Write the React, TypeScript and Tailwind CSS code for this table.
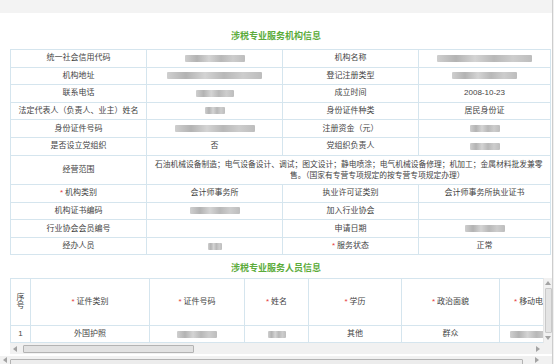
import React from "react";

const Blur = ({ w }: { w: number }) => (
  <span
    className="inline-block h-[7px] align-middle rounded-[1px] bg-[linear-gradient(90deg,#cfcfcf,#b3b3b3_20%,#d4d4d4_40%,#b8b8b8_60%,#cdcdcd_80%,#bdbdbd)] blur-[0.7px]"
    style={{ width: w }}
  />
);

const Req = () => <span className="text-[#e5393b] mr-[2px]">*</span>;

const td = "border border-[#d5e5ee] text-center p-0 align-middle";

type Cell = React.ReactNode;
const rows1: [Cell, Cell, Cell, Cell][] = [
  ["统一社会信用代码", <Blur w={60} />, "机构名称", <Blur w={95} />],
  ["机构地址", <Blur w={95} />, "登记注册类型", <Blur w={65} />],
  ["联系电话", <Blur w={38} />, "成立时间", "2008-10-23"],
  ["法定代表人（负责人、业主）姓名", <Blur w={20} />, "身份证件种类", "居民身份证"],
  ["身份证件号码", <Blur w={80} />, "注册资金（元）", <Blur w={30} />],
  ["是否设立党组织", "否", "党组织负责人", <Blur w={30} />],
];
const rows2: [Cell, Cell, Cell, Cell][] = [
  [<><Req />机构类别</>, "会计师事务所", "执业许可证类别", "会计师事务所执业证书"],
  ["机构证书编码", <Blur w={50} />, "加入行业协会", ""],
  ["行业协会会员编号", "", "申请日期", <Blur w={40} />],
  ["经办人员", <Blur w={14} />, <><Req />服务状态</>, "正常"],
];

const Row = ({ r }: { r: [Cell, Cell, Cell, Cell] }) => (
  <tr className="h-[17.6px]">
    {r.map((c, i) => (
      <td key={i} className={td}>
        {c}
      </td>
    ))}
  </tr>
);

const Tri = ({ dir }: { dir: "l" | "r" | "u" | "d" }) => {
  const pts = { l: "4,0 4,6 0,3", r: "0,0 0,6 4,3", u: "0,4 6,4 3,0", d: "0,0 6,0 3,4" }[dir];
  const wide = dir === "u" || dir === "d";
  return (
    <svg width={wide ? 6 : 4} height={wide ? 4 : 6} viewBox={wide ? "0 0 6 4" : "0 0 4 6"} className="block">
      <polygon points={pts} fill="#a3a3a3" />
    </svg>
  );
};

export default function App() {
  return (
    <div className="flex h-[364px] w-[554px] overflow-hidden bg-white font-['Liberation_Sans','Noto_Sans_CJK_SC',sans-serif] text-[8px] leading-[10px] text-[#444]">
      <div className="flex w-[552px] shrink-0 flex-col">
        <div className="h-[13px] shrink-0 bg-[#f3f3f3]" />
        <div className="shrink-0 pt-[17px] pb-[7px] text-center text-[9px] font-bold leading-[12px] text-[#5cab3b]">
          涉税专业服务机构信息
        </div>
        <div className="shrink-0 pl-[10px]">
          <table className="w-[540px] table-fixed border-collapse">
            <colgroup>
              <col className="w-[136px]" />
              <col className="w-[136px]" />
              <col className="w-[136px]" />
              <col className="w-[132px]" />
            </colgroup>
            <tbody>
              {rows1.map((r, i) => (
                <Row key={i} r={r} />
              ))}
              <tr className="h-[29.5px]">
                <td className={td}>经营范围</td>
                <td className={`${td} text-left text-[7.75px]`} colSpan={3}>
                  <div className="whitespace-nowrap pl-[8px] leading-[11px]">
                    石油机械设备制造；电气设备设计、调试；图文设计；静电喷涂；电气机械设备修理；机加工；金属材料批发兼零
                  </div>
                  <div className="whitespace-nowrap pl-[143px] leading-[11px]">
                    售。（国家有专营专项规定的按专营专项规定办理）
                  </div>
                </td>
              </tr>
              {rows2.map((r, i) => (
                <Row key={i} r={r} />
              ))}
            </tbody>
          </table>
        </div>
        <div className="shrink-0 pt-[7px] pb-[4px] text-center text-[9px] font-bold leading-[12px] text-[#5cab3b]">
          涉税专业服务人员信息
        </div>
        <div className="ml-[10px] flex w-[542px] shrink-0 flex-col">
          <div className="flex">
            <div className="w-[533px] overflow-hidden">
              <table className="w-[561px] table-fixed border-collapse">
                <colgroup>
                  <col className="w-[20px]" />
                  <col className="w-[119px]" />
                  <col className="w-[95px]" />
                  <col className="w-[64px]" />
                  <col className="w-[93px]" />
                  <col className="w-[98px]" />
                  <col className="w-[72px]" />
                </colgroup>
                <tbody>
                  <tr className="h-[47px]">
                    <td className={`${td} leading-[8px]`}>
                      序<br />号
                    </td>
                    <td className={td}><Req />证件类别</td>
                    <td className={td}><Req />证件号码</td>
                    <td className={td}><Req />姓名</td>
                    <td className={td}><Req />学历</td>
                    <td className={td}><Req />政治面貌</td>
                    <td className={`${td} whitespace-nowrap text-left pl-[14px]`}><Req />移动电话</td>
                  </tr>
                  <tr className="h-[17px]">
                    <td className={td}>1</td>
                    <td className={td}>外国护照</td>
                    <td className={td}><Blur w={40} /></td>
                    <td className={td}><Blur w={18} /></td>
                    <td className={td}>其他</td>
                    <td className={td}>群众</td>
                    <td className={`${td} text-left pl-[10px]`}><Blur w={44} /></td>
                  </tr>
                </tbody>
              </table>
            </div>
            <div className="flex w-[9px] flex-col items-center border-l border-[#e6e6e6] bg-[#f1f1f1] py-[3px]">
              <Tri dir="u" />
              <div className="my-[3px] w-[7px] flex-1 rounded-[1px] border border-[#c9c9c9] bg-[#e4e4e4]" />
              <Tri dir="d" />
            </div>
          </div>
          <div className="flex h-[11px]">
            <div className="flex w-[533px] items-center gap-[3px] bg-[#f1f1f1] px-[3px]">
              <Tri dir="l" />
              <div className="ml-[3px] h-[8px] w-[171px] rounded-[1px] border border-[#b3b3b3] bg-[#e2e2e2]" />
              <div className="flex-1" />
              <Tri dir="r" />
            </div>
            <div className="w-[9px] bg-[#f1f1f1]" />
          </div>
        </div>
        <div className="mt-[2px] flex h-[8px] shrink-0 items-center bg-[#f1f1f1] pl-[3px]">
          <Tri dir="l" />
          <div className="ml-[3px] mt-[3px] h-[8px] w-[513px] self-start rounded-[1px] border border-[#b3b3b3] bg-[#ececec]" />
          <div className="ml-[12px]">
            <Tri dir="r" />
          </div>
        </div>
      </div>
      <div className="w-[2px] shrink-0 border-l border-[#cdcdcd] bg-[#f0f0f0]" />
    </div>
  );
}
